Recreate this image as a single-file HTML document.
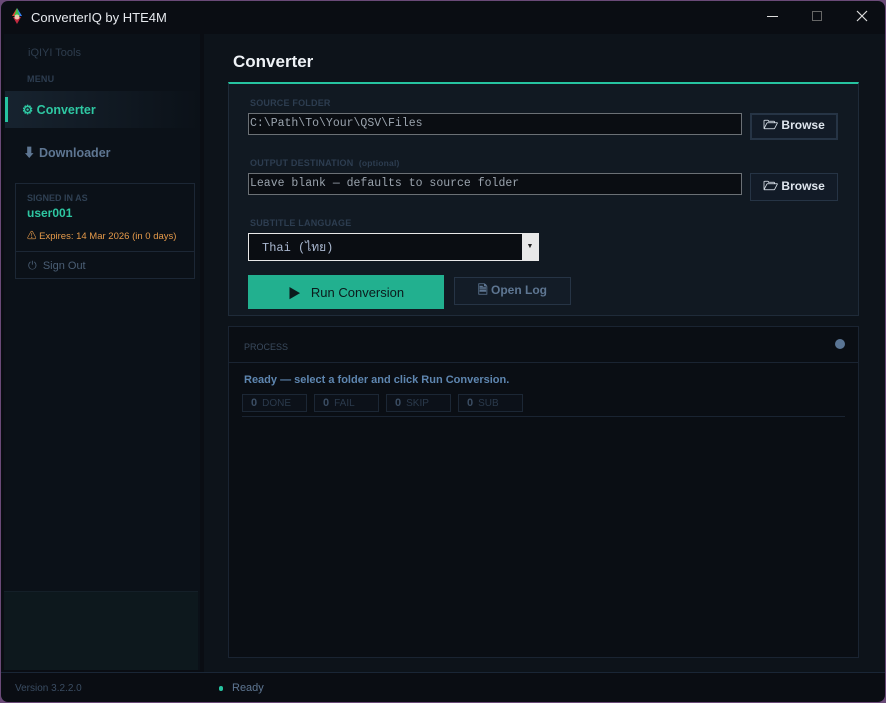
<!DOCTYPE html>
<html><head><meta charset="utf-8"><style>
*{box-sizing:border-box;margin:0;padding:0}
body{width:886px;height:703px;background:#6a4a78;font-family:"Liberation Sans","Noto Sans CJK SC",sans-serif;overflow:hidden;position:relative}
.win{position:absolute;left:1px;top:1px;width:884px;height:701px;background:#0a0d13;border-radius:7px;overflow:hidden}
.abs{position:absolute}
.title{left:30px;top:9px;color:#e6e9ee;font-size:13px}
.side{left:3px;top:33px;width:196px;height:636px;background:#0b1118}
.main{left:203px;top:33px;width:681px;height:638px;background:#0d131a}
.lbl{font-size:9px;font-weight:bold;color:#2d3d50;letter-spacing:.2px}
.inp{background:#0a0d12;border:1px solid #6b7075;height:22px;font-family:"Liberation Mono",monospace;font-size:11.5px;color:#9aa3ad;padding:3px 0 0 1px;white-space:nowrap}
.btn{border:1px solid #263445;background:#121b27;color:#dfe6ee;font-size:12px;font-weight:bold;display:flex;align-items:center;justify-content:center;gap:6px}
.stat{border:1px solid #1c2735;background:#0c1119;width:65px;height:18px;font-size:10px;color:#2b3a4c;padding:2px 0 0 8px}
.stat b{color:#3b4d63;margin-right:5px;font-size:11px}
</style></head><body>
<div class="win">
 <svg class="abs" style="left:8px;top:6px" width="16" height="18" viewBox="0 0 16 18"><path d="M3 9 L8 1 L13 9 Z" fill="#3ac04a"/><path d="M3 9 L8 1 L5 9Z" fill="#e33"/><path d="M11 9 L8 1 L13 9Z" fill="#37f"/><path d="M4 10 L8 17 L12 10 Z" fill="#c42a40"/><circle cx="8" cy="10" r="2.5" fill="#f0c8b0"/></svg>
 <div class="abs title">ConverterIQ by HTE4M</div>
 <div class="abs" style="left:766px;top:15px;width:11px;height:1px;background:#ddd"></div>
 <div class="abs" style="left:811px;top:10px;width:10px;height:10px;border:1px solid #666"></div>
 <svg class="abs" style="left:855px;top:9px" width="12" height="12"><path d="M1 1L11 11M11 1L1 11" stroke="#ddd" stroke-width="1.2"/></svg>

 <div class="abs side">
  <div class="abs" style="left:24px;top:13px;font-size:11px;color:#2e3d4e">iQIYI Tools</div>
  <div class="abs lbl" style="left:23px;top:40px">MENU</div>
  <div class="abs" style="left:1px;top:57px;width:195px;height:37px;background:linear-gradient(90deg,#17232f,#0b1118)"></div>
  <div class="abs" style="left:1px;top:63px;width:3px;height:25px;background:#26c3a0"></div>
  <div class="abs" style="left:18px;top:68px;font-size:12.5px;font-weight:bold;color:#2ec7a2">⚙ Converter</div>
  <div class="abs" style="left:19px;top:108px;font-size:12.5px;font-weight:bold;color:#5e7692">⬇ Downloader</div>
  <div class="abs" style="left:11px;top:149px;width:180px;height:96px;border:1px solid #1c2735">
   <div class="abs" style="left:11px;top:9px;font-size:9px;font-weight:bold;color:#2f4053">SIGNED IN AS</div>
   <div class="abs" style="left:11px;top:22px;font-size:12px;font-weight:bold;color:#2ec7a2">user001</div>
   <div class="abs" style="left:11px;top:44px;font-size:9.5px;color:#e59a4a">⚠ Expires: 14 Mar 2026 (in 0 days)</div>
   <div class="abs" style="left:0;top:67px;width:178px;height:1px;background:#1c2735"></div>
   <div class="abs" style="left:12px;top:76px;font-size:11px;color:#4b5f75">⏻&nbsp; Sign Out</div>
  </div>
  <div class="abs" style="left:0;top:557px;width:194px;height:79px;background:#0d181d;border-top:1px solid #141f28"></div>
 </div>

 <div class="abs main">
  <div class="abs" style="left:29px;top:18px;font-size:17px;font-weight:bold;color:#eef2f6">Converter</div>
  <div class="abs" style="left:24px;top:48px;width:631px;height:234px;background:#111922;border:1px solid #1f2b39;border-top:2px solid #26c3a0">
   <div class="abs lbl" style="left:21px;top:14px">SOURCE FOLDER</div>
   <div class="abs inp" style="left:19px;top:29px;width:494px">C:\Path\To\Your\QSV\Files</div>
   <div class="abs btn" style="left:521px;top:29px;width:88px;height:27px;border-width:2px">🗁 Browse</div>
   <div class="abs lbl" style="left:21px;top:74px">OUTPUT DESTINATION&nbsp; <span style="font-size:8.5px">(optional)</span></div>
   <div class="abs inp" style="left:19px;top:89px;width:494px">Leave blank — defaults to source folder</div>
   <div class="abs btn" style="left:521px;top:89px;width:88px;height:28px">🗁 Browse</div>
   <div class="abs lbl" style="left:21px;top:134px">SUBTITLE LANGUAGE</div>
   <div class="abs" style="left:19px;top:149px;width:291px;height:28px;border:1px solid #e8e8e8;background:#0a0d12">
    <div class="abs" style="left:13px;top:4px;font-family:'Liberation Mono','Noto Sans CJK SC',monospace;font-size:12px;color:#aab8d0">Thai (ไทย)</div>
    <div class="abs" style="right:0;top:0;width:16px;height:26px;background:#e8e8e8;font-size:7px;text-align:center;line-height:26px;color:#222">▼</div>
   </div>
   <div class="abs btn" style="left:19px;top:191px;width:196px;height:34px;background:#22b08f;border:none;color:#0b1b1c;font-weight:normal;font-size:13px;gap:10px"><span style="color:#0b1b1c">▶</span> Run Conversion</div>
   <div class="abs btn" style="left:225px;top:193px;width:117px;height:28px;background:#131c27;color:#5e7692">🗎 Open Log</div>
  </div>
  <div class="abs" style="left:24px;top:292px;width:631px;height:332px;background:#0a0e14;border:1px solid #1a2432">
   <div class="abs" style="left:15px;top:15px;font-size:9px;color:#3a4a5d">PROCESS</div>
   <div class="abs" style="left:606px;top:12px;width:10px;height:10px;border-radius:50%;background:#5a7595"></div>
   <div class="abs" style="left:0;top:35px;width:629px;height:1px;background:#1a2432"></div>
   <div class="abs" style="left:15px;top:47px;font-size:11px;font-weight:bold;color:#5e86b0">Ready — select a folder and click Run Conversion.</div>
   <div class="abs stat" style="left:13px;top:67px"><b>0</b>DONE</div>
   <div class="abs stat" style="left:85px;top:67px"><b>0</b>FAIL</div>
   <div class="abs stat" style="left:157px;top:67px"><b>0</b>SKIP</div>
   <div class="abs stat" style="left:229px;top:67px"><b>0</b>SUB</div>
   <div class="abs" style="left:13px;top:89px;width:603px;height:1px;background:#1a2432"></div>
  </div>
 </div>
 <div class="abs" style="left:0;top:671px;width:884px;height:1px;background:#1a2636"></div>
 <div class="abs" style="left:14px;top:682px;font-size:10px;color:#3a4c62">Version 3.2.2.0</div>
 <div class="abs" style="left:218px;top:685px;width:4px;height:5px;border-radius:2px;background:#26c3a0"></div>
 <div class="abs" style="left:231px;top:681px;font-size:11px;color:#5e7692">Ready</div>
</div>
</body></html>
